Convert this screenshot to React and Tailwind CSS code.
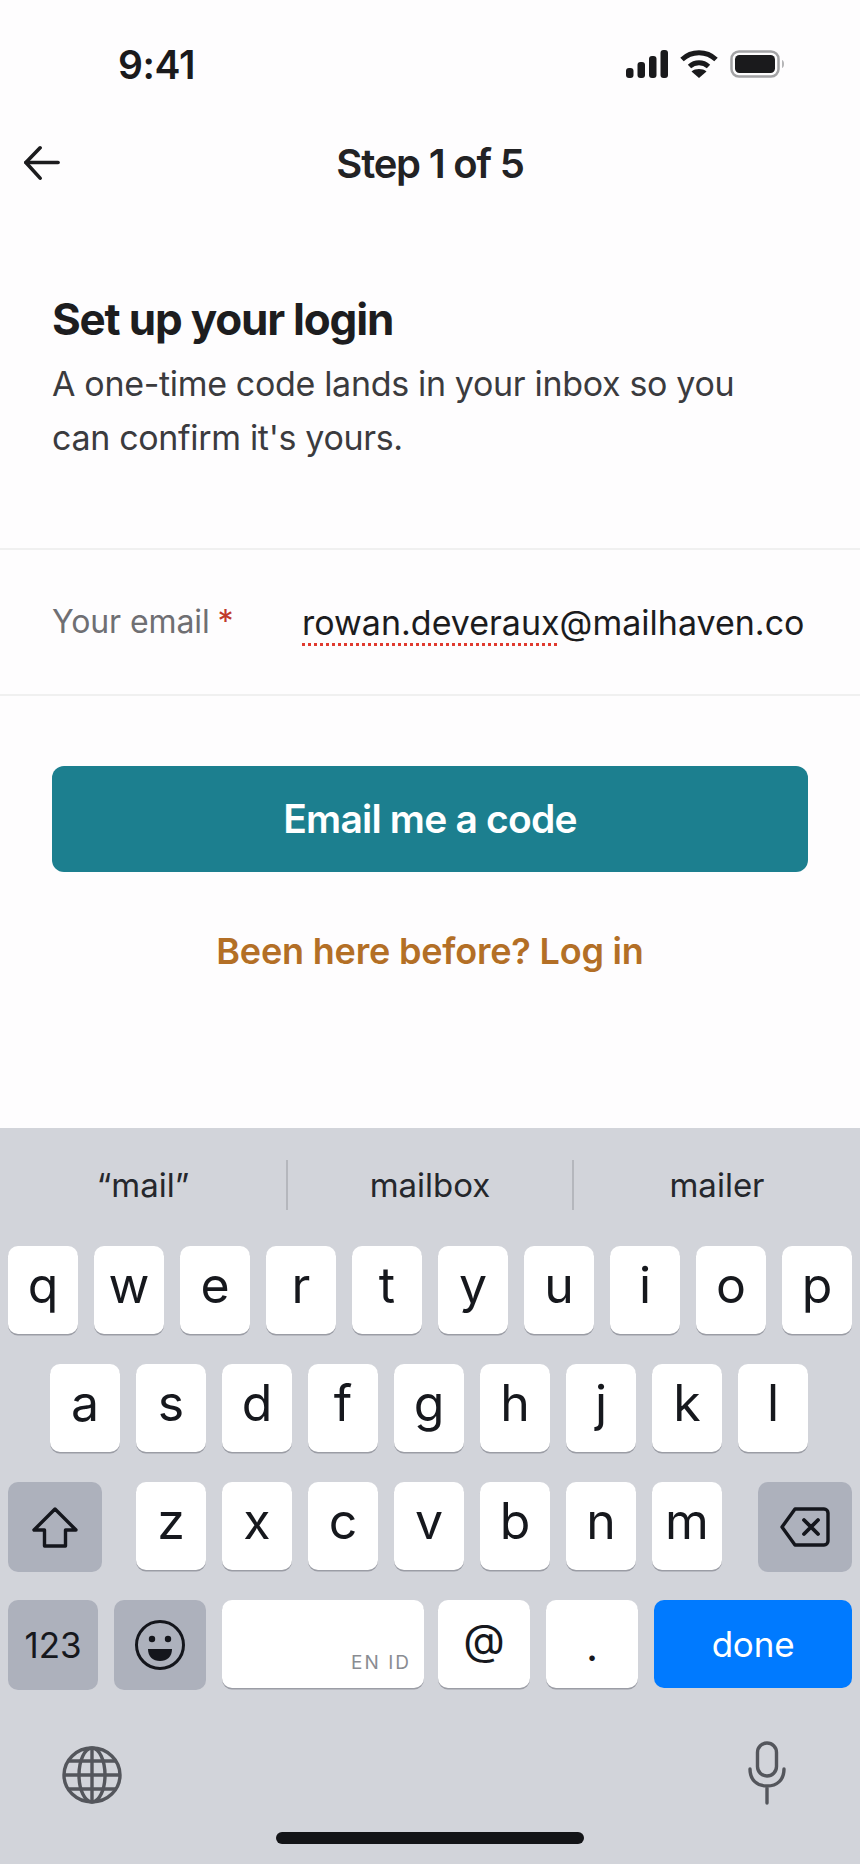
const rows = {
  top: ['q', 'w', 'e', 'r', 't', 'y', 'u', 'i', 'o', 'p'],
  mid: ['a', 's', 'd', 'f', 'g', 'h', 'j', 'k', 'l'],
  low: ['z', 'x', 'c', 'v', 'b', 'n', 'm'],
};

const Key = ({ label, className = 'w-[70px]', textClass = 'pb-[10px] text-[50px]' }) => (
  <div className={`h-[88px] ${className} ${textClass} rounded-[10px] bg-white shadow-[0_1.5px_0_#9b9da5] flex items-center justify-center leading-none text-[#16181d]`}>
    {label}
  </div>
);

const Suggestion = ({ className = 'flex-1', children }) => (
  <div className={`${className} text-center text-[33px] leading-[50px] text-[#25272c]`}>{children}</div>
);

const Signal = () => (
  <svg width="42" height="28" viewBox="0 0 42 28" fill="#1a1a1c">
    <rect x="0" y="18" width="7.5" height="10" rx="3" />
    <rect x="11.5" y="12" width="7.5" height="16" rx="3" />
    <rect x="23" y="6" width="7.5" height="22" rx="3" />
    <rect x="34.5" y="0" width="7.5" height="28" rx="3" />
  </svg>
);

const Wifi = () => (
  <svg width="38" height="28" viewBox="0 0 38 28" fill="none" stroke="#1a1a1c" strokeWidth="5">
    <path d="M2 9.5C11.5 .5 26.5 .5 36 9.5" />
    <path d="M9.5 16.5c5.5-5 13.5-5 19 0" />
    <path d="M19 28l-7.5-6.5c4.2-3.2 10.8-3.2 15 0z" fill="#1a1a1c" stroke="none" />
  </svg>
);

const Battery = () => (
  <svg width="54" height="28" viewBox="0 0 54 28" fill="none">
    <rect x="1.5" y="1.5" width="47" height="25" rx="7.5" stroke="#a3a3a5" strokeWidth="2.5" />
    <rect x="5" y="5" width="40" height="18" rx="4.5" fill="#1a1a1c" />
    <path d="M52 10c1.5.6 2 2 2 4s-.5 3.400-2 4z" fill="#b5b5b7" />
  </svg>
);

export default function App() {
  return (
    <div className="w-[860px] h-[1864px] bg-[#fefdfe] flex flex-col font-['Inter',sans-serif] overflow-hidden">
      {/* status bar */}
      <div className="h-[128px] flex items-center justify-between pl-[118px] pr-[76px]">
        <span className="text-[39px] font-semibold leading-none tracking-[-0.4px] text-[#1a1a1c]">9:41</span>
        <div className="flex items-center gap-[12px]">
          <Signal />
          <Wifi />
          <Battery />
        </div>
      </div>

      {/* nav */}
      <div className="h-[72px] flex items-center px-[24px]">
        <div className="flex-1">
          <svg width="36" height="36" viewBox="0 0 38 36" fill="none" stroke="#1c1c1e" strokeWidth="3.800" strokeLinecap="round" strokeLinejoin="round" className="-mt-[3px]">
            <path d="M36 17.500H2" />
            <path d="M17 2 2 17.500 17 34" />
          </svg>
        </div>
        <span className="text-[40px] font-semibold leading-none tracking-[-1.2px] text-[#222224]">Step 1 of 5</span>
        <div className="flex-1" />
      </div>

      {/* intro */}
      <div className="pt-[89px] pb-[83px] px-[52px]">
        <h1 className="text-[44px] font-bold leading-[60px] tracking-[-1.2px] text-[#1d1d1f]">Set up your login</h1>
        <p className="mt-[8px] max-w-[720px] text-[34px] leading-[54px] tracking-[-0.33px] text-[#3b3b3e]">
          A one-time code lands in your inbox so you can confirm it's yours.
        </p>
      </div>

      {/* email field */}
      <div className="h-[148px] border-y-2 border-[#f0f0f0] flex items-center px-[52px]">
        <span className="w-[250px] text-[32px] tracking-[-0.1px] text-[#6f6f73]">
          Your email <span className="ml-[-1px] text-[#c0392b]">*</span>
        </span>
        <span className="text-[34px] text-[#1c1c1e]">
          <span className="underline decoration-dotted decoration-[#e03a2f] decoration-[3px] underline-offset-[8px]">rowan.deveraux</span>@mailhaven.co
        </span>
      </div>

      {/* actions */}
      <div className="px-[52px] pt-[70px]">
        <button className="w-full h-[106px] rounded-[12px] bg-[#1c7f8f] text-white text-[39px] font-semibold tracking-[-0.8px]">
          Email me a code
        </button>
        <div className="mt-[54px] text-center text-[36px] leading-[50px] font-semibold tracking-[-0.2px] text-[#b36f26]">
          Been here before? Log in
        </div>
      </div>

      {/* keyboard */}
      <div className="mt-auto h-[736px] bg-[#d2d4da] flex flex-col">
        <div className="h-[118px] flex items-start pt-[32px]">
          <Suggestion className="w-[286px]">“mail”</Suggestion>
          <div className="w-[2px] h-[50px] bg-[#b5b7bd]" />
          <Suggestion className="w-[284px]">mailbox</Suggestion>
          <div className="w-[2px] h-[50px] bg-[#b5b7bd]" />
          <Suggestion>mailer</Suggestion>
        </div>

        <div className="flex gap-[16px] px-[8px]">
          {rows.top.map((k) => <Key key={k} label={k} />)}
        </div>

        <div className="flex gap-[16px] pl-[50px] mt-[30px]">
          {rows.mid.map((k) => <Key key={k} label={k} />)}
        </div>

        <div className="flex items-start px-[8px] mt-[30px]">
          <div className="w-[94px] h-[90px] rounded-[10px] bg-[#adb1bc] flex items-center justify-center">
            <svg width="46" height="41" viewBox="0 0 46 41" fill="none" stroke="#14161c" strokeWidth="3.400" strokeLinejoin="round">
              <path d="M23 2 2 23h10.500v16h21V23H44z" />
            </svg>
          </div>
          <div className="flex gap-[16px] ml-[34px]">
            {rows.low.map((k) => <Key key={k} label={k} />)}
          </div>
          <div className="ml-auto w-[94px] h-[90px] rounded-[10px] bg-[#adb1bc] flex items-center justify-center">
            <svg width="50" height="40" viewBox="0 0 50 40" fill="none" stroke="#14161c" strokeWidth="3.400" strokeLinejoin="round" strokeLinecap="round">
              <path d="M15 2h29a4 4 0 0 1 4 4v28a4 4 0 0 1-4 4H15L2 20z" />
              <path d="M24 13l14 14M38 13 24 27" strokeWidth="3.800" />
            </svg>
          </div>
        </div>

        <div className="flex items-start px-[8px] mt-[28px]">
          <div className="w-[90px] h-[90px] rounded-[10px] bg-[#adb1bc] flex items-center justify-center text-[35px] text-[#16181d]">123</div>
          <div className="ml-[16px] w-[92px] h-[90px] rounded-[10px] bg-[#adb1bc] flex items-center justify-center">
            <svg width="52" height="52" viewBox="0 0 52 52" fill="none">
              <circle cx="26" cy="26" r="23.500" stroke="#14161c" strokeWidth="3" />
              <circle cx="18" cy="20" r="3.200" fill="#14161c" />
              <circle cx="34" cy="20" r="3.200" fill="#14161c" />
              <path d="M14 30h24c0 8-5 12-12 12s-12-4-12-12z" fill="#14161c" />
            </svg>
          </div>
          <div className="ml-[16px] w-[202px] h-[88px] rounded-[10px] bg-white shadow-[0_1.5px_0_#9b9da5] flex items-end justify-end pr-[13px] pb-[16px]">
            <span className="text-[19px] leading-none tracking-[2px] text-[#8a8c92]">EN ID</span>
          </div>
          <Key label="@" className="ml-[14px] w-[92px]" textClass="pb-[10px] text-[43px]" />
          <Key label="." className="ml-[16px] w-[92px]" textClass="pt-[4px] text-[42px]" />
          <div className="ml-[16px] w-[198px] h-[88px] rounded-[10px] bg-[#007aff] flex items-center justify-center text-[35px] tracking-[-0.2px] text-white">done</div>
        </div>

        <div className="flex items-start justify-between pl-[62px] pr-[74px] mt-[51px]">
          <svg width="60" height="58" viewBox="0 0 60 58" fill="none" stroke="#54565c" strokeWidth="3.400" className="mt-[5px]">
            <ellipse cx="30" cy="29" rx="28" ry="27" />
            <ellipse cx="30" cy="29" rx="13" ry="27" />
            <path d="M30 2v54M2 29h56M6 15h48M6 43h48" />
          </svg>
          <svg width="38" height="64" viewBox="0 0 38 64" fill="none" stroke="#54565c" strokeWidth="3.400" strokeLinecap="round">
            <rect x="9.500" y="2" width="19" height="33" rx="9.500" />
            <path d="M2 28c0 11 7 17 17 17s17-6 17-17M19 45v17" />
          </svg>
        </div>

        <div className="mt-auto mb-[20px] mx-auto w-[308px] h-[12px] rounded-full bg-[#131417]" />
      </div>
    </div>
  );
}
